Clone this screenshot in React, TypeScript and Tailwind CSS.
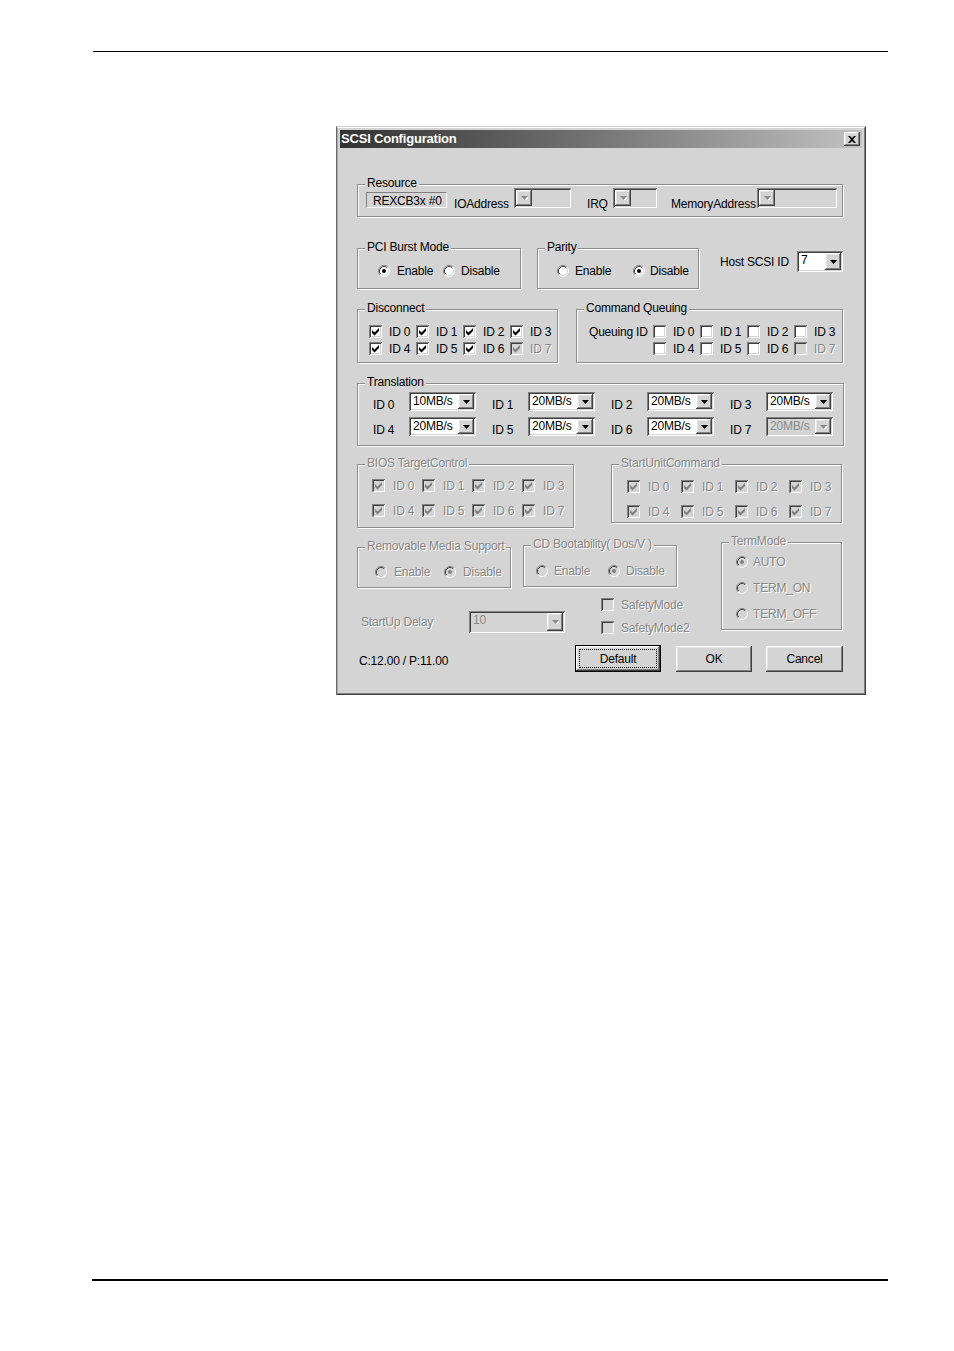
import React from 'react';

const raised =
  'shadow-[inset_-1px_-1px_0_#404040,inset_1px_1px_0_#ffffff,inset_-2px_-2px_0_#808080,inset_2px_2px_0_#e4e4e4]';
const sunken =
  'shadow-[inset_1px_1px_0_#808080,inset_-1px_-1px_0_#ffffff,inset_2px_2px_0_#404040,inset_-2px_-2px_0_#d4d4d4]';
const dimText = 'text-[#878787] [text-shadow:1px_1px_0_#ffffff]';

const ids = ['ID 0', 'ID 1', 'ID 2', 'ID 3', 'ID 4', 'ID 5', 'ID 6', 'ID 7'];

const GroupBox: React.FC<{
  label: string;
  disabled?: boolean;
  className?: string;
  children?: React.ReactNode;
}> = ({ label, disabled, className = '', children }) => (
  <div
    className={`relative shrink-0 border border-[#8c8c8c] shadow-[1px_1px_0_#ffffff,inset_1px_1px_0_#ffffff] ${className}`}
  >
    <span
      className={`absolute left-[7px] top-[-9px] px-[2px] leading-[14px] bg-[#d4d4d4] whitespace-nowrap ${
        disabled ? dimText : 'text-black'
      }`}
    >
      {label}
    </span>
    {children}
  </div>
);

const Check: React.FC<{ checked?: boolean; disabled?: boolean }> = ({ checked, disabled }) => (
  <span className={`relative block w-[13px] h-[13px] shrink-0 ${disabled ? 'bg-[#d4d4d4]' : 'bg-white'} ${sunken}`}>
    {checked && (
      <svg className="absolute left-0 top-0" width="13" height="13" viewBox="0 0 13 13">
        <path d="M3 5 5.5 7.5 10 3v3l-4.5 4.5L3 8z" fill={disabled ? '#808080' : '#000000'} />
      </svg>
    )}
  </span>
);

const CheckItem: React.FC<{
  label: string;
  checked?: boolean;
  disabled?: boolean;
  gap?: string;
}> = ({ label, checked, disabled, gap = 'gap-[7px]' }) => (
  <div className={`flex items-center h-[13px] ${gap}`}>
    <Check checked={checked} disabled={disabled} />
    <span className={`whitespace-nowrap leading-[14px] ${disabled ? dimText : 'text-black'}`}>{label}</span>
  </div>
);

const Radio: React.FC<{ checked?: boolean; disabled?: boolean }> = ({ checked, disabled }) => (
  <svg width="12" height="12" viewBox="0 0 12 12" className="block shrink-0">
    <circle cx="6" cy="6" r="5" fill={disabled ? '#d4d4d4' : '#ffffff'} />
    <path d="M2.11 9.89A5.5 5.5 0 0 1 9.89 2.11" stroke="#808080" fill="none" />
    <path d="M2.82 9.18A4.5 4.5 0 0 1 9.18 2.82" stroke="#404040" fill="none" />
    <path d="M9.89 2.11A5.5 5.5 0 0 1 2.11 9.89" stroke="#ffffff" fill="none" />
    <path d="M9.18 2.82A4.5 4.5 0 0 1 2.82 9.18" stroke="#d4d4d4" fill="none" />
    {checked && <circle cx="6" cy="6" r="2" fill={disabled ? '#808080' : '#000000'} />}
  </svg>
);

const RadioItem: React.FC<{
  label: string;
  checked?: boolean;
  disabled?: boolean;
  className?: string;
}> = ({ label, checked, disabled, className = '' }) => (
  <div className={`flex items-center shrink-0 ${className}`}>
    <Radio checked={checked} disabled={disabled} />
    <span className={`whitespace-nowrap leading-[14px] ${disabled ? dimText : 'text-black'}`}>{label}</span>
  </div>
);

const DropButton: React.FC<{ disabled?: boolean }> = ({ disabled }) => (
  <span className={`flex w-[16px] h-full shrink-0 items-center justify-center bg-[#d4d4d4] ${raised}`}>
    <svg width="7" height="4" viewBox="0 0 7 4">
      {disabled && <path d="M1 1h7L4.5 5z" fill="#ffffff" />}
      <path d="M0 0h7L3.5 4z" fill={disabled ? '#8a8a8a' : '#000000'} />
    </svg>
  </span>
);

const Combo: React.FC<{
  value?: string;
  disabled?: boolean;
  buttonLeft?: boolean;
  className?: string;
}> = ({ value = '', disabled, buttonLeft, className = '' }) => (
  <div className={`flex shrink-0 p-[2px] ${disabled ? 'bg-[#d4d4d4]' : 'bg-white'} ${sunken} ${className}`}>
    {buttonLeft && <DropButton disabled={disabled} />}
    <span
      className={`flex-1 pl-[2px] leading-[14px] whitespace-nowrap overflow-hidden ${
        disabled ? 'text-[#8a8a8a]' : 'text-black'
      }`}
    >
      {value}
    </span>
    {!buttonLeft && <DropButton disabled={disabled} />}
  </div>
);

const PushButton: React.FC<{ label: string; isDefault?: boolean; className?: string }> = ({
  label,
  isDefault,
  className = '',
}) =>
  isDefault ? (
    <div className={`shrink-0 border border-black ${className}`}>
      <div className={`h-full p-[3px] bg-[#d4d4d4] ${raised}`}>
        <div className="h-full flex items-center justify-center border border-dotted border-black">{label}</div>
      </div>
    </div>
  ) : (
    <div className={`shrink-0 flex items-center justify-center bg-[#d4d4d4] ${raised} ${className}`}>{label}</div>
  );

export default function App() {
  return (
    <div className="w-[954px] h-[1351px] bg-white flex flex-col font-['Liberation_Sans',Arial,sans-serif] text-[12px] leading-[14px] tracking-[-0.2px] text-black">
      <div className="mt-[51px] ml-[93px] w-[795px] h-px bg-black shrink-0" />

      {/* Dialog window */}
      <div className="mt-[74px] ml-[336px] w-[530px] h-[569px] shrink-0 border border-t-[#cfcfcf] border-l-[#6a6a6a] border-r-[#404040] border-b-[#404040]">
        <div className="h-full flex flex-col p-[2px] bg-[#d4d4d4] border border-t-white border-l-[#a8a8a8] border-r-[#808080] border-b-[#808080]">
          {/* Title bar */}
          <div className="h-[18px] shrink-0 flex items-center bg-gradient-to-r from-[#333333] to-[#c2c2c2]">
            <span className="pl-[1px] font-bold text-[13px] text-white tracking-[-0.2px]">SCSI Configuration</span>
            <div className={`ml-auto mr-[2px] w-[16px] h-[14px] flex items-center justify-center bg-[#d4d4d4] ${raised}`}>
              <svg width="8" height="7" viewBox="0 0 8 7">
                <path d="M0 0h2l2 2 2-2h2L5 3.5 8 7H6L4 5 2 7H0l3-3.5z" fill="#000000" />
              </svg>
            </div>
          </div>

          {/* Content */}
          <div className="flex-1 flex flex-col">
            {/* Resource */}
            <GroupBox label="Resource" className="mt-[36px] ml-[17px] w-[486px] h-[33px]">
              <div className="flex items-start pl-[8px]">
                <div className="mt-[7px] w-[81px] h-[16px] shrink-0 border border-t-[#808080] border-l-[#808080] border-r-white border-b-white pl-[6px] pt-[1px] leading-[14px] whitespace-nowrap">
                  REXCB3x #0
                </div>
                <span className="ml-[7px] w-[60px] shrink-0 mt-[12px] whitespace-nowrap">IOAddress</span>
                <Combo disabled buttonLeft className="mt-[3px] w-[57px] h-[20px]" />
                <span className="ml-[16px] w-[26px] shrink-0 mt-[12px]">IRQ</span>
                <Combo disabled buttonLeft className="mt-[3px] w-[44px] h-[20px]" />
                <span className="ml-[14px] w-[86px] shrink-0 mt-[12px] whitespace-nowrap">MemoryAddress</span>
                <Combo disabled buttonLeft className="mt-[3px] w-[80px] h-[20px]" />
              </div>
            </GroupBox>

            {/* PCI Burst / Parity / Host ID */}
            <div className="mt-[31px] h-[41px] flex items-start shrink-0">
              <GroupBox label="PCI Burst Mode" className="ml-[17px] w-[164px] h-[41px]">
                <div className="h-full flex items-center pt-[4px] pl-[20px]">
                  <RadioItem label="Enable" checked className="w-[65px] gap-[7px]" />
                  <RadioItem label="Disable" className="gap-[6px]" />
                </div>
              </GroupBox>
              <GroupBox label="Parity" className="ml-[16px] w-[162px] h-[41px]">
                <div className="h-full flex items-center pt-[4px] pl-[19px]">
                  <RadioItem label="Enable" className="w-[76px] gap-[6px]" />
                  <RadioItem label="Disable" checked className="gap-[5px]" />
                </div>
              </GroupBox>
              <div className="ml-[21px] mt-[3px] h-[21px] flex items-center">
                <span className="w-[77px] shrink-0 whitespace-nowrap">Host SCSI ID</span>
                <Combo value="7" className="w-[46px] h-[21px]" />
              </div>
            </div>

            {/* Disconnect / Command Queuing */}
            <div className="mt-[20px] h-[54px] flex items-start shrink-0">
              <GroupBox label="Disconnect" className="ml-[17px] w-[201px] h-[54px]">
                <div className="pt-[15px] pl-[11px] grid grid-cols-[repeat(4,47px)] gap-y-[4px]">
                  {ids.map((id, i) => (
                    <CheckItem key={id} label={id} checked disabled={i === 7} />
                  ))}
                </div>
              </GroupBox>
              <GroupBox label="Command Queuing" className="ml-[18px] w-[267px] h-[54px]">
                <div className="pt-[15px] pl-[12px] flex items-start">
                  <span className="w-[64px] shrink-0 h-[13px] flex items-center whitespace-nowrap">Queuing ID</span>
                  <div className="grid grid-cols-[repeat(4,47px)] gap-y-[4px]">
                    {ids.map((id, i) => (
                      <CheckItem key={id} label={id} disabled={i === 7} />
                    ))}
                  </div>
                </div>
              </GroupBox>
            </div>

            {/* Translation */}
            <GroupBox label="Translation" className="mt-[20px] ml-[17px] w-[487px] h-[63px]">
              <div className="pt-[8px] pl-[15px] flex flex-col gap-[5px]">
                {[0, 1].map((row) => (
                  <div key={row} className="flex">
                    {[0, 1, 2, 3].map((col) => {
                      const n = row * 4 + col;
                      return (
                        <div key={n} className="w-[119px] shrink-0 flex items-start">
                          <span className="w-[36px] shrink-0 mt-[6px]">{ids[n]}</span>
                          <Combo
                            value={n === 0 ? '10MB/s' : '20MB/s'}
                            disabled={n === 7}
                            className="w-[67px] h-[19px]"
                          />
                        </div>
                      );
                    })}
                  </div>
                ))}
              </div>
            </GroupBox>

            {/* BIOS TargetControl / StartUnitCommand */}
            <div className="mt-[18px] h-[64px] flex items-start shrink-0">
              <GroupBox label="BIOS TargetControl" disabled className="ml-[17px] w-[217px] h-[64px]">
                <div className="pt-[14px] pl-[14px] grid grid-cols-[repeat(4,50px)] gap-y-[12px]">
                  {ids.map((id) => (
                    <CheckItem key={id} label={id} checked disabled gap="gap-[8px]" />
                  ))}
                </div>
              </GroupBox>
              <GroupBox label="StartUnitCommand" disabled className="ml-[37px] w-[231px] h-[59px]">
                <div className="pt-[15px] pl-[15px] grid grid-cols-[repeat(4,54px)] gap-y-[12px]">
                  {ids.map((id) => (
                    <CheckItem key={id} label={id} checked disabled gap="gap-[8px]" />
                  ))}
                </div>
              </GroupBox>
            </div>

            {/* Removable / CD / TermMode / StartUp */}
            <div className="mt-[14px] h-[92px] flex items-start shrink-0">
              <div className="ml-[17px] w-[320px] shrink-0 flex flex-col">
                <div className="h-[46px] flex items-start">
                  <GroupBox label="Removable Media Support" disabled className="mt-[5px] w-[154px] h-[41px]">
                    <div className="h-full flex items-center pt-[8px] pl-[17px]">
                      <RadioItem label="Enable" disabled className="w-[69px] gap-[7px]" />
                      <RadioItem label="Disable" checked disabled className="gap-[7px]" />
                    </div>
                  </GroupBox>
                  <GroupBox label="CD Bootability( Dos/V )" disabled className="ml-[12px] mt-[3px] w-[154px] h-[42px]">
                    <div className="h-full flex items-center pt-[10px] pl-[12px]">
                      <RadioItem label="Enable" disabled className="w-[72px] gap-[6px]" />
                      <RadioItem label="Disable" checked disabled className="gap-[6px]" />
                    </div>
                  </GroupBox>
                </div>
                <div className="flex items-start">
                  <div className="ml-[4px] mt-[23px] flex items-center">
                    <span className={`w-[108px] shrink-0 whitespace-nowrap ${dimText}`}>StartUp Delay</span>
                    <Combo value="10" disabled className="w-[96px] h-[22px]" />
                  </div>
                  <div className="ml-[36px] mt-[10px] flex flex-col gap-[10px]">
                    <CheckItem label="SafetyMode" disabled />
                    <CheckItem label="SafetyMode2" disabled />
                  </div>
                </div>
              </div>
              <GroupBox label="TermMode" disabled className="ml-[44px] w-[121px] h-[88px]">
                <div className="pt-[13px] pl-[14px] flex flex-col gap-[14px]">
                  <RadioItem label="AUTO" checked disabled className="h-[12px] gap-[5px]" />
                  <RadioItem label="TERM_ON" disabled className="h-[12px] gap-[5px]" />
                  <RadioItem label="TERM_OFF" disabled className="h-[12px] gap-[5px]" />
                </div>
              </GroupBox>
            </div>

            {/* Version + buttons */}
            <div className="mt-[11px] h-[27px] flex items-center shrink-0">
              <span className="ml-[19px] mt-[4px] whitespace-nowrap">C:12.00 / P:11.00</span>
              <div className="ml-auto mr-[19px] flex items-center">
                <PushButton label="Default" isDefault className="w-[86px] h-[27px]" />
                <PushButton label="OK" className="ml-[15px] w-[76px] h-[26px]" />
                <PushButton label="Cancel" className="ml-[14px] w-[77px] h-[26px]" />
              </div>
            </div>
          </div>
        </div>
      </div>

      <div className="mt-auto mb-[70px] ml-[92px] w-[796px] h-[2px] bg-black shrink-0" />
    </div>
  );
}
